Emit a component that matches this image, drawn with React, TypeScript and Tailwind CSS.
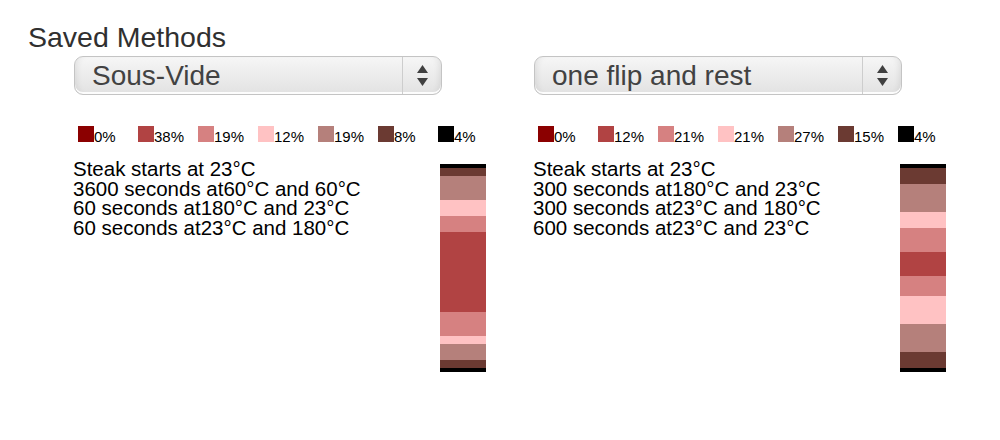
import React from "react";

const C = {
  dark: "#8b0000",
  red: "#b14343",
  salmon: "#d68181",
  pink: "#ffc2c3",
  rose: "#b5807b",
  brown: "#6b3a32",
  black: "#000000",
};

type Seg = [string, number];

type Method = {
  name: string;
  legend: string[];
  lines: string[];
  bar: Seg[];
};

const legendColors = [C.dark, C.red, C.salmon, C.pink, C.rose, C.brown, C.black];

const methods: Method[] = [
  {
    name: "Sous-Vide",
    legend: ["0%", "38%", "19%", "12%", "19%", "8%", "4%"],
    lines: [
      "Steak starts at 23°C",
      "3600 seconds at60°C and 60°C",
      "60 seconds at180°C and 23°C",
      "60 seconds at23°C and 180°C",
    ],
    bar: [
      [C.black, 4],
      [C.brown, 8],
      [C.rose, 24],
      [C.pink, 16],
      [C.salmon, 16],
      [C.red, 80],
      [C.salmon, 24],
      [C.pink, 8],
      [C.rose, 16],
      [C.brown, 8],
      [C.black, 4],
    ],
  },
  {
    name: "one flip and rest",
    legend: ["0%", "12%", "21%", "21%", "27%", "15%", "4%"],
    lines: [
      "Steak starts at 23°C",
      "300 seconds at180°C and 23°C",
      "300 seconds at23°C and 180°C",
      "600 seconds at23°C and 23°C",
    ],
    bar: [
      [C.black, 4],
      [C.brown, 16],
      [C.rose, 28],
      [C.pink, 16],
      [C.salmon, 24],
      [C.red, 24],
      [C.salmon, 20],
      [C.pink, 28],
      [C.rose, 28],
      [C.brown, 16],
      [C.black, 4],
    ],
  },
];

function Select({ value }: { value: string }) {
  return (
    <div className="flex h-[39px] w-[368px] overflow-hidden rounded-[9px] border border-[#c4c4c4] bg-gradient-to-b from-[#f6f6f6] via-[#ececec] to-[#e2e2e2] shadow-[inset_0_-2px_0_rgba(255,255,255,0.9),inset_6px_0_6px_-4px_rgba(0,0,0,0.08),inset_-6px_0_6px_-4px_rgba(0,0,0,0.08)]">
      <div className="flex flex-1 items-center pl-[17px] text-[28px] leading-none text-[#424242]">
        {value}
      </div>
      <div className="w-px bg-[#cdcdcd]" />
      <div className="flex w-[38px] flex-col items-center justify-center gap-[5px]">
        <svg width="11" height="8" viewBox="0 0 11 8">
          <polygon points="5.5,0 11,8 0,8" fill="#404040" />
        </svg>
        <svg width="11" height="8" viewBox="0 0 11 8">
          <polygon points="0,0 11,0 5.5,8" fill="#404040" />
        </svg>
      </div>
    </div>
  );
}

function Panel({ m }: { m: Method }) {
  return (
    <div className="flex w-[460px] flex-col">
      <Select value={m.name} />
      <div className="ml-1 mt-[31px] flex items-baseline">
        {m.legend.map((p, i) => (
          <div key={i} className="flex w-[60px] items-baseline">
            <div className="h-4 w-4" style={{ backgroundColor: legendColors[i] }} />
            <span className="text-[15px] leading-[17px] text-black">{p}</span>
          </div>
        ))}
      </div>
      <div className="mt-[14px] flex">
        <div className="-ml-px w-[367px] text-[20.5px] leading-[19.6px] text-black">
          {m.lines.map((l, i) => (
            <div key={i} className="whitespace-nowrap">
              {l}
            </div>
          ))}
        </div>
        <div className="mt-[5px] flex w-[46px] flex-col">
          {m.bar.map(([c, h], i) => (
            <div key={i} style={{ backgroundColor: c, height: h }} />
          ))}
        </div>
      </div>
    </div>
  );
}

export default function App() {
  return (
    <div
      className="h-[440px] w-[1000px] bg-white"
      style={{ fontFamily: '"Liberation Sans", Arial, Helvetica, sans-serif' }}
    >
      <div className="pl-[28px] pt-[21px] text-[28.5px] leading-[32px] text-[#303030]">
        Saved Methods
      </div>
      <div className="ml-[74px] mt-[3px] flex">
        {methods.map((m, i) => (
          <Panel key={i} m={m} />
        ))}
      </div>
    </div>
  );
}
